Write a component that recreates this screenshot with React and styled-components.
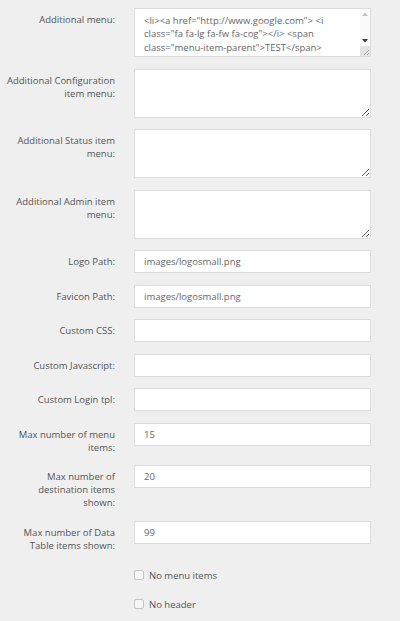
import React from 'react';
import styled, { createGlobalStyle } from 'styled-components';

const GlobalStyle = createGlobalStyle`
  html, body {
    margin: 0;
    padding: 0;
    background: #efefef;
    font-family: "Open Sans", "Liberation Sans", sans-serif;
  }
`;

const Form = styled.form`
  padding: 8px 0 0 0;
  width: 400px;
`;

const Row = styled.div`
  display: grid;
  grid-template-columns: 115px 237px;
  column-gap: 19px;
  align-items: start;
  margin-bottom: 11.5px;
`;

const Label = styled.label`
  box-sizing: border-box;
  padding: 5px 0 0 6px;
  text-align: right;
  font-size: 9.5px;
  line-height: 13px;
  color: #555;
`;

const Input = styled.input`
  box-sizing: border-box;
  width: 100%;
  height: 23px;
  margin: 0;
  padding: 0 9px;
  border: 1px solid #dcdcdc;
  background: #fff;
  font-family: inherit;
  font-size: 9.5px;
  color: #666;
  outline: none;
`;

const TextArea = styled.textarea`
  box-sizing: border-box;
  display: block;
  width: 100%;
  height: 49px;
  margin: 0;
  padding: 5px 0 0 9px;
  border: 1px solid #dcdcdc;
  background: #fff;
  font-family: inherit;
  font-size: 9.5px;
  line-height: 13.3px;
  color: #666;
  resize: vertical;
  outline: none;
`;

// textarea with a drawn scrollbar column (the page's screenshot hides native bars)
const ScrollBox = styled.div`
  box-sizing: border-box;
  display: flex;
  height: 49px;
  border: 1px solid #dcdcdc;
  background: #fff;
`;

const InnerArea = styled(TextArea)`
  flex: 1;
  height: 100%;
  border: none;
  resize: none;
  overflow: hidden;
  padding-right: 24px;
`;

const ScrollBar = styled.div`
  display: flex;
  flex-direction: column;
  width: 10px;
  background: #fafafa;
`;

const Arrow = styled.div`
  display: flex;
  align-items: center;
  justify-content: center;
  height: 10px;
`;

const Spacer = styled.div`
  flex: 1;
`;

const Corner = styled.div`
  display: flex;
  align-items: flex-end;
  justify-content: flex-end;
  height: 10px;
  background: #e3e3e3;
`;

const CheckRow = styled.div`
  display: grid;
  grid-template-columns: 115px 237px;
  column-gap: 19px;
  height: 24px;
  margin-bottom: 5px;
  align-items: center;
`;

const CheckLabel = styled.label`
  grid-column: 2;
  display: flex;
  align-items: center;
  gap: 5px;
  font-size: 9.5px;
  color: #555;
`;

const Box = styled.input`
  appearance: none;
  box-sizing: border-box;
  width: 10px;
  height: 10px;
  margin: 0;
  border: 1px solid #c4c4c4;
  border-radius: 2px;
  background: #f7f7f7;
`;

const menuHtml =
  '<li><a href="http://www.google.com"> <i class="fa fa-lg fa-fw fa-cog"></i> <span class="menu-item-parent">TEST</span> </a> <ul> <li><a href="#">Link</a></li> </ul> </li>';

const fields = [
  { label: 'Logo Path:', value: 'images/logosmall.png' },
  { label: 'Favicon Path:', value: 'images/logosmall.png' },
  { label: 'Custom CSS:', value: '' },
  { label: 'Custom Javascript:', value: '' },
  { label: 'Custom Login tpl:', value: '' },
  { label: 'Max number of menu items:', value: '15' },
  { label: 'Max number of destination items shown:', value: '20' },
  { label: 'Max number of Data Table items shown:', value: '99' },
];

const areas = [
  'Additional Configuration item menu:',
  'Additional Status item menu:',
  'Additional Admin item menu:',
];

export default function App() {
  return (
    <>
      <GlobalStyle />
      <Form>
        <Row>
          <Label>Additional menu:</Label>
          <ScrollBox>
            <InnerArea defaultValue={menuHtml} />
            <ScrollBar>
              <Arrow>
                <svg width="6" height="4" viewBox="0 0 6 4">
                  <path d="M0 4 L3 0.5 L6 4 Z" fill="#c2c2c2" />
                </svg>
              </Arrow>
              <Spacer />
              <Arrow>
                <svg width="6" height="4" viewBox="0 0 6 4">
                  <path d="M0 0 L6 0 L3 3.5 Z" fill="#3a3a3a" />
                </svg>
              </Arrow>
              <Corner>
                <svg width="8" height="8" viewBox="0 0 8 8">
                  <path d="M7 2 L2 7 M7 5 L5 7" stroke="#999" strokeWidth="0.8" />
                </svg>
              </Corner>
            </ScrollBar>
          </ScrollBox>
        </Row>
        {areas.map((label) => (
          <Row key={label}>
            <Label>{label}</Label>
            <TextArea />
          </Row>
        ))}
        {fields.map((f) => (
          <Row key={f.label}>
            <Label>{f.label}</Label>
            <Input type="text" defaultValue={f.value} />
          </Row>
        ))}
        <CheckRow>
          <CheckLabel>
            <Box type="checkbox" />
            No menu items
          </CheckLabel>
        </CheckRow>
        <CheckRow>
          <CheckLabel>
            <Box type="checkbox" />
            No header
          </CheckLabel>
        </CheckRow>
      </Form>
    </>
  );
}
